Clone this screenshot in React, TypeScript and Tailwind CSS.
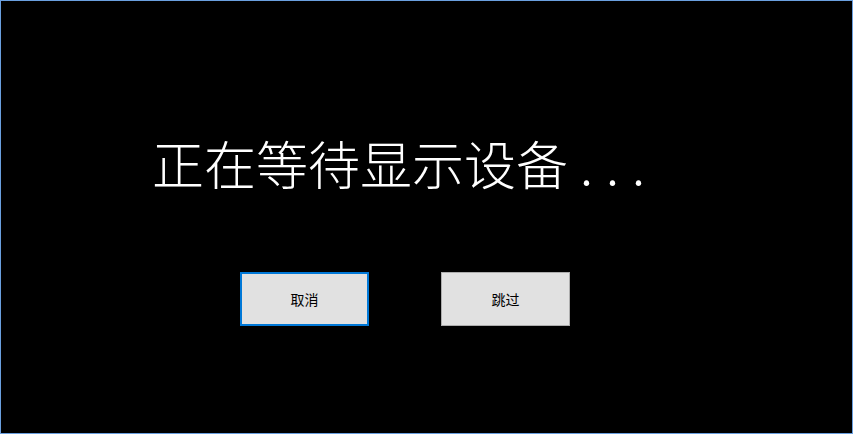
export default function App() {
  return (
    <div className="w-[853px] h-[434px] bg-black border border-[#6a9fdf] flex flex-col font-['Noto_Sans_CJK_SC',sans-serif]">
      {/* 标题 */}
      <div className="pt-[136px] pl-[151px] text-white text-[52px] leading-[52px] font-light whitespace-nowrap">
        正在等待显示设备<span className="tracking-[13px] pl-[12px]">...</span>
      </div>
      {/* 按钮 */}
      <div className="mt-[83px] pl-[239px] flex gap-[72px]">
        <button className="w-[129px] h-[54px] bg-[#e1e1e1] border-2 border-[#0078d7] text-[14px] text-black">
          取消
        </button>
        <button className="w-[129px] h-[54px] bg-[#e1e1e1] border border-[#adadad] text-[14px] text-black">
          跳过
        </button>
      </div>
    </div>
  );
}
